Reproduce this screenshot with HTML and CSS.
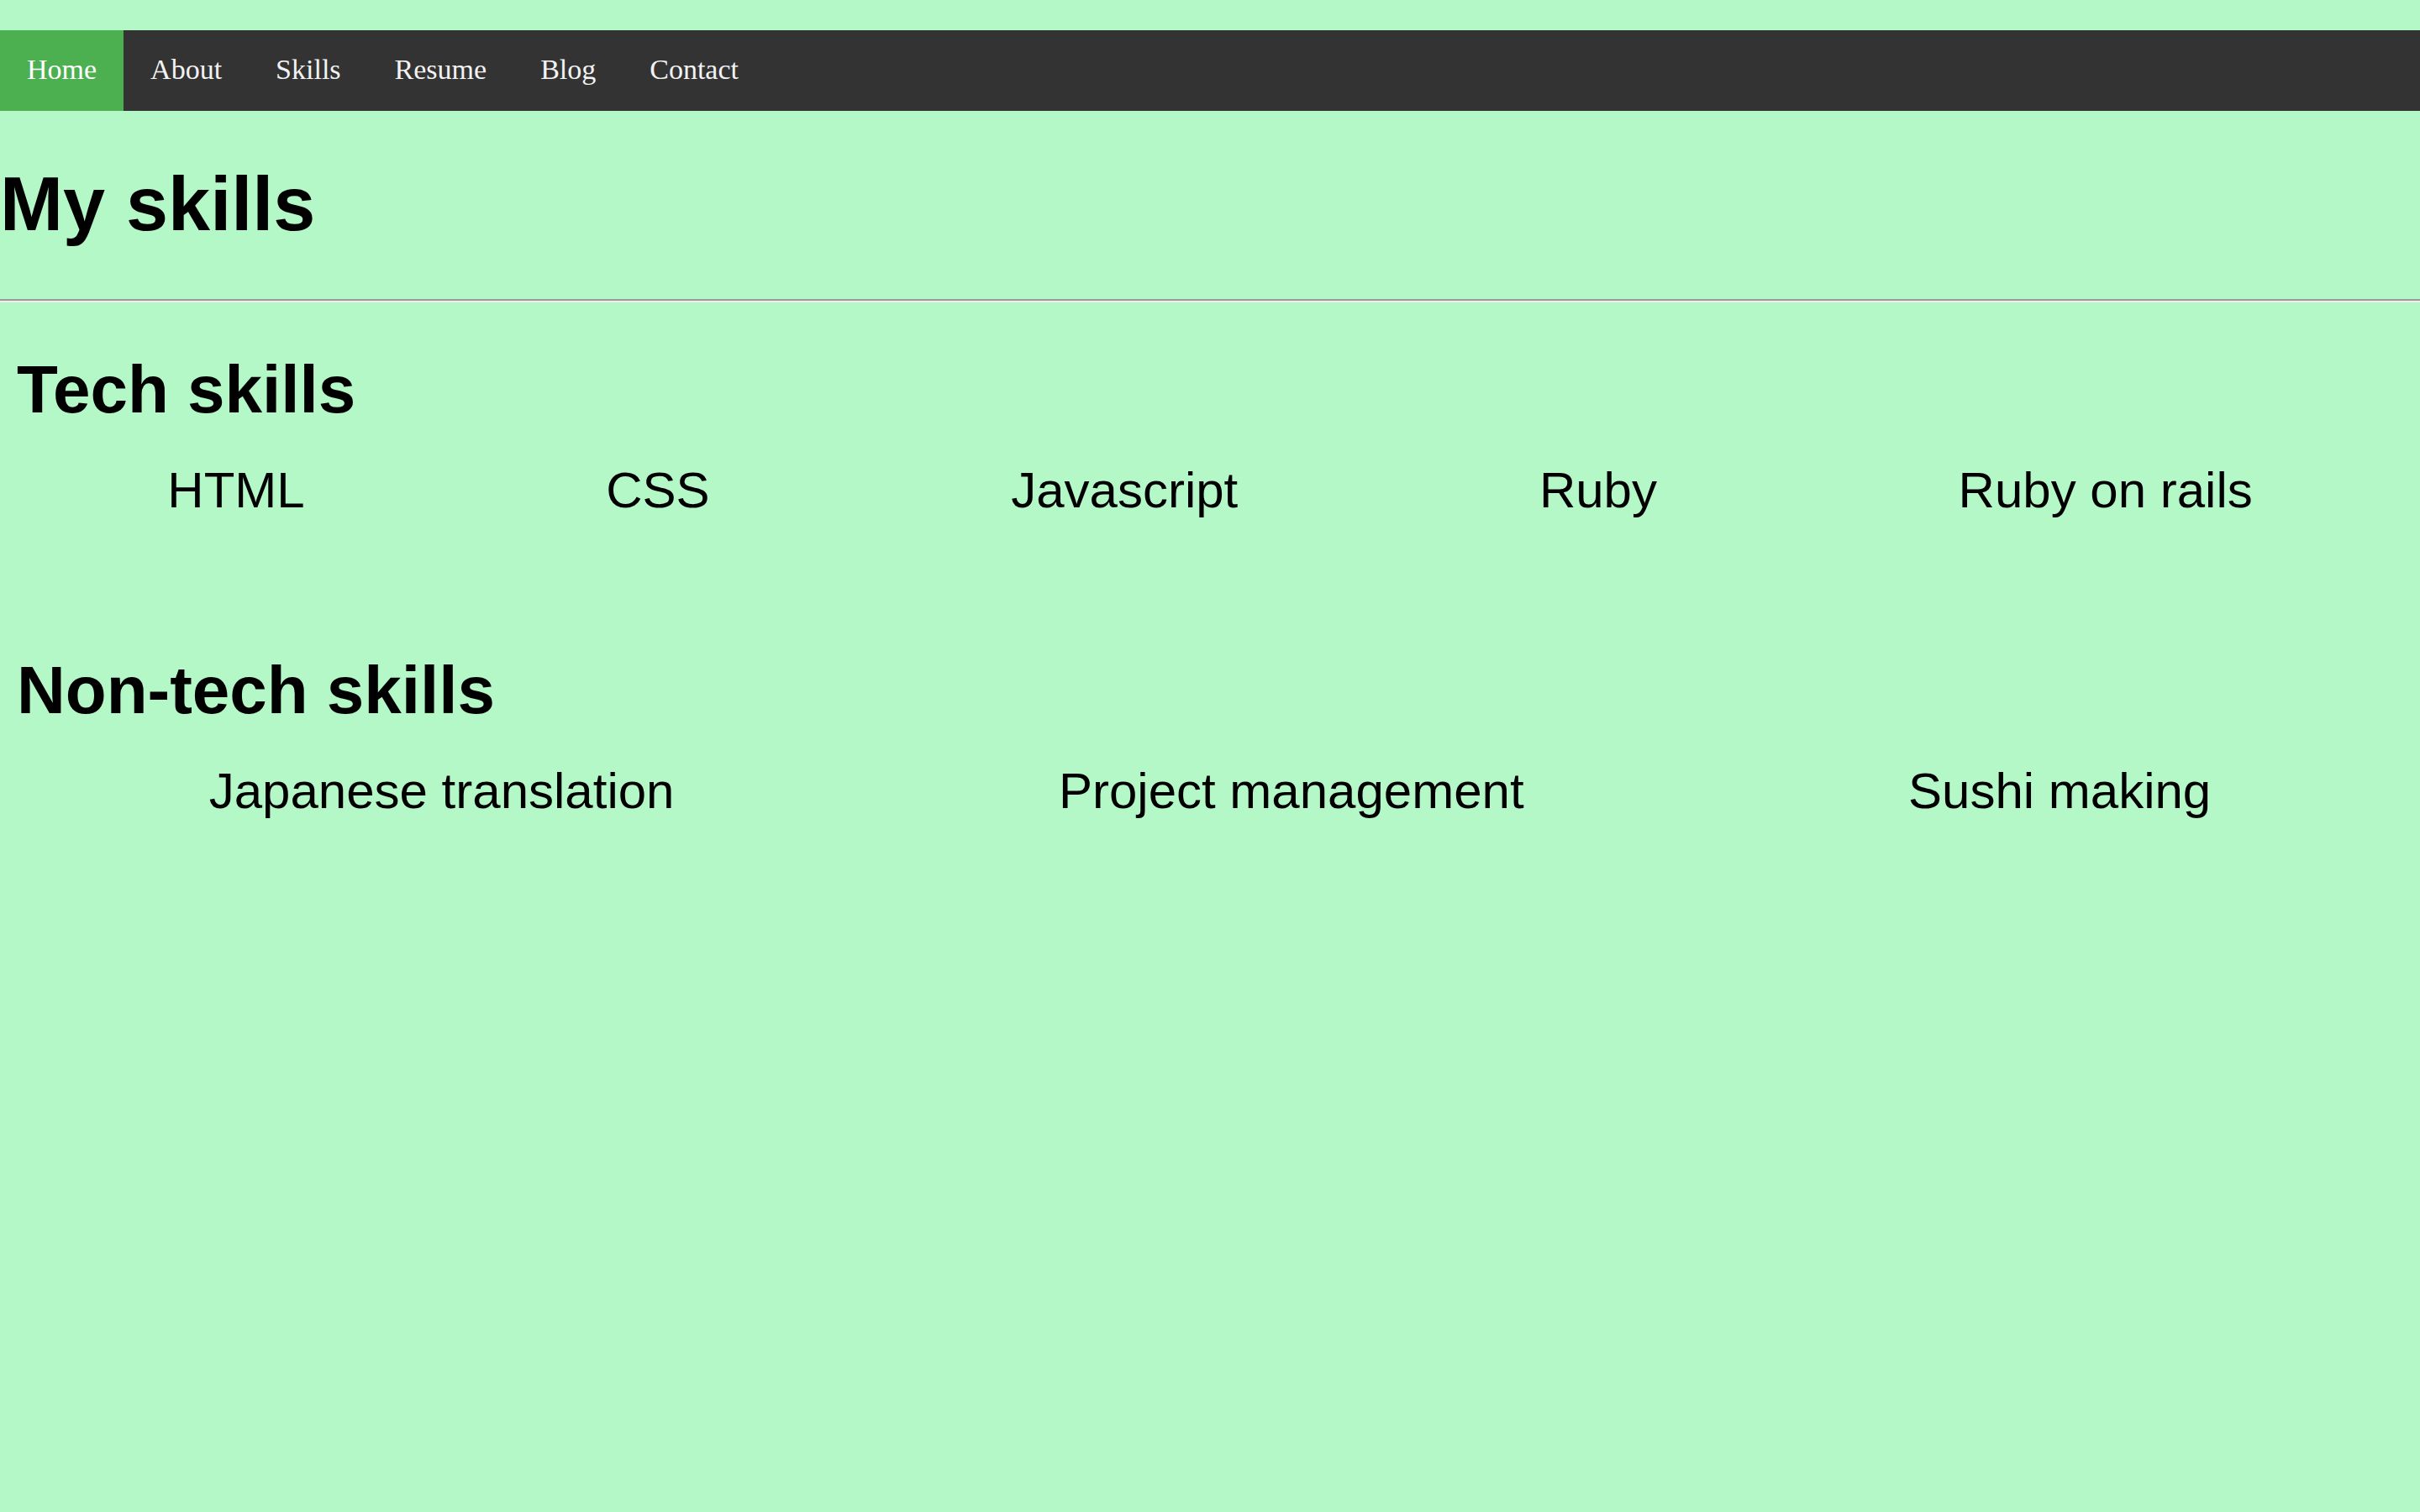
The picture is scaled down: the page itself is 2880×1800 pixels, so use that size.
FILE: index.html
```html
<!DOCTYPE html>
<html lang="en">
<head>
<meta charset="utf-8">
<title>My skills</title>
<link rel="stylesheet" href="styles.css">
</head>
<body>
  <nav class="topnav">
    <a class="nav-link active" href="#">Home</a>
    <a class="nav-link" href="#">About</a>
    <a class="nav-link" href="#">Skills</a>
    <a class="nav-link" href="#">Resume</a>
    <a class="nav-link" href="#">Blog</a>
    <a class="nav-link" href="#">Contact</a>
  </nav>
  <h1 class="page-title">My skills</h1>
  <hr class="divider">
  <section class="skills">
    <h2 class="skills-title">Tech skills</h2>
    <div class="skill-row">
      <div class="skill">HTML</div>
      <div class="skill">CSS</div>
      <div class="skill">Javascript</div>
      <div class="skill">Ruby</div>
      <div class="skill">Ruby on rails</div>
    </div>
  </section>
  <section class="skills">
    <h2 class="skills-title">Non-tech skills</h2>
    <div class="skill-row">
      <div class="skill">Japanese translation</div>
      <div class="skill">Project management</div>
      <div class="skill">Sushi making</div>
    </div>
  </section>
</body>
</html>
```

FILE: styles.css
```css
html, body {
  margin: 0;
  background: #b4f8c8;
}

body {
  padding-top: 36px;
  font-family: "Liberation Sans", Arial, sans-serif;
  color: #000;
}

.topnav {
  display: flex;
  background: #333333;
}

.nav-link {
  display: block;
  padding: 27px 32px 29px;
  font-family: "Liberation Serif", "Times New Roman", serif;
  font-size: 34px;
  line-height: 40px;
  color: #f2f2f2;
  text-decoration: none;
}

.nav-link.active {
  background: #4caf50;
  color: #ffffff;
}

.page-title {
  margin: 60px 0 61px;
  font-size: 90px;
  line-height: 103px;
  font-weight: bold;
}

.divider {
  margin: 0;
  height: 0;
  border: 0;
  border-top: 2px solid #9a9a9a;
  border-bottom: 2px solid #eeeeee;
}

.skills {
  padding: 58px 20px 100px;
}

.skills-title {
  margin: 0 0 39px;
  font-size: 80px;
  line-height: 92px;
  font-weight: bold;
}

.skill-row {
  display: flex;
}

.skill {
  flex: 1 1 auto;
  text-align: center;
  font-size: 60px;
  line-height: 69px;
}
```
